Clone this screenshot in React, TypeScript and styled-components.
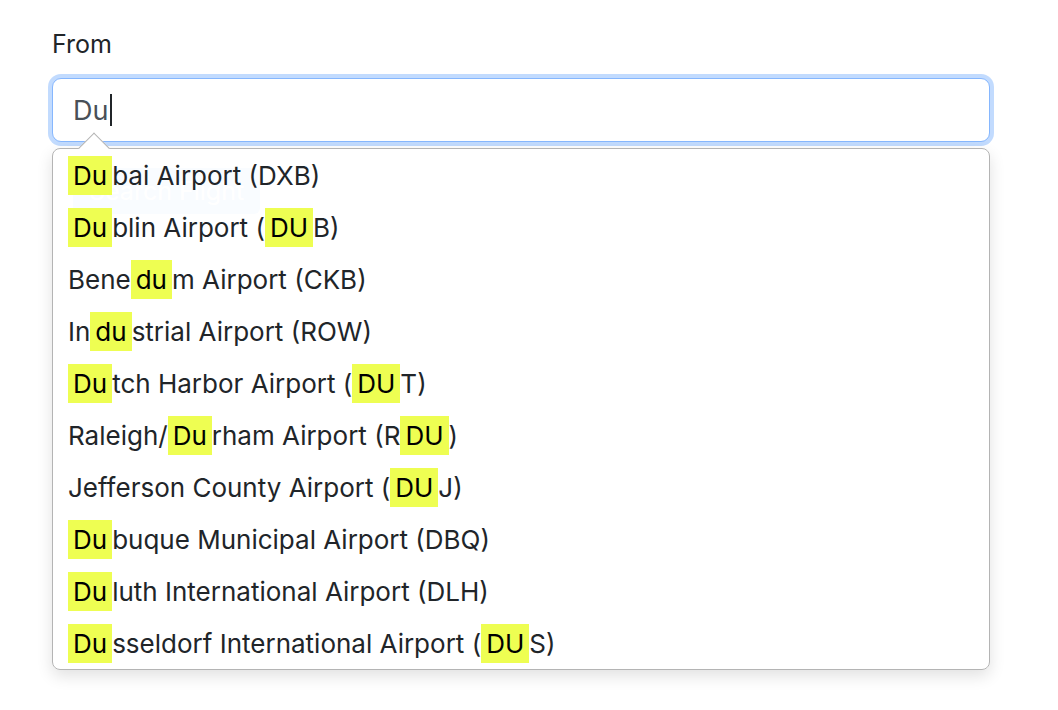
import { Fragment } from "react";
import styled, { createGlobalStyle } from "styled-components";

const GlobalStyle = createGlobalStyle`
  html, body, #root {
    height: 100%;
  }
  body {
    margin: 0;
    background: #fff;
    font-family: Inter, "Liberation Sans", Arial, sans-serif;
    color: #212529;
  }
`;

const airports = [
  "Dubai Airport (DXB)",
  "Dublin Airport (DUB)",
  "Benedum Airport (CKB)",
  "Industrial Airport (ROW)",
  "Dutch Harbor Airport (DUT)",
  "Raleigh/Durham Airport (RDU)",
  "Jefferson County Airport (DUJ)",
  "Dubuque Municipal Airport (DBQ)",
  "Duluth International Airport (DLH)",
  "Dusseldorf International Airport (DUS)",
];

// split a label into plain / matched parts, case-insensitive
const splitMatches = (text: string, query: string) => {
  const parts: { text: string; hit: boolean }[] = [];
  const lower = text.toLowerCase();
  const q = query.toLowerCase();
  let pos = 0;
  let idx = lower.indexOf(q);
  while (idx !== -1) {
    if (idx > pos) parts.push({ text: text.slice(pos, idx), hit: false });
    parts.push({ text: text.slice(idx, idx + q.length), hit: true });
    pos = idx + q.length;
    idx = lower.indexOf(q, pos);
  }
  if (pos < text.length) parts.push({ text: text.slice(pos), hit: false });
  return parts;
};

export default function App() {
  const query = "Du";

  return (
    <>
      <GlobalStyle />
      <Page>
        <Label>From</Label>
        <Field>
          <FakeInput>
            {query}
            <Caret />
          </FakeInput>
          <Dropdown>
            <Arrow />
            {airports.map((name) => (
              <Item key={name}>
                {splitMatches(name, query).map((p, i) => (
                  <Fragment key={i}>
                    {p.hit ? <Mark>{p.text}</Mark> : p.text}
                  </Fragment>
                ))}
              </Item>
            ))}
          </Dropdown>
        </Field>
        <SearchButton>Search Flight</SearchButton>
      </Page>
    </>
  );
}

const Page = styled.div`
  box-sizing: border-box;
  min-height: 710px;
  padding: 28px 68px 0 52px;
  width: 1058px;
`;

const Label = styled.div`
  font-size: 25px;
  line-height: 32px;
  margin-bottom: 18px;
  color: #212529;
`;

const Field = styled.div`
  position: relative;
  width: 938px;
`;

const FakeInput = styled.div`
  box-sizing: border-box;
  height: 64px;
  display: flex;
  align-items: center;
  padding: 0 20px;
  border: 1px solid #86b7fe;
  border-radius: 9px;
  box-shadow: 0 0 0 4px rgba(13, 110, 253, 0.25);
  font-size: 27px;
  color: #495057;
  background: #fff;
`;

const Caret = styled.span`
  display: inline-block;
  width: 2px;
  height: 32px;
  margin-left: 2px;
  background: #212529;
`;

const Dropdown = styled.div`
  position: absolute;
  top: 70px;
  left: 0;
  right: 0;
  z-index: 2;
  box-sizing: border-box;
  border: 1px solid #b4b4b4;
  border-radius: 8px;
  background: rgba(255, 255, 255, 0.975);
  box-shadow: 0 6px 16px rgba(0, 0, 0, 0.12);
  padding: 0;
`;

const Arrow = styled.div`
  position: absolute;
  top: -12px;
  left: 30px;
  width: 21px;
  height: 21px;
  background: #fff;
  border-top: 1px solid #b4b4b4;
  border-left: 1px solid #b4b4b4;
  transform: rotate(45deg);
`;

const Item = styled.div`
  position: relative;
  height: 52px;
  display: flex;
  align-items: center;
  padding-left: 15px;
  font-size: 26px;
  white-space: pre;
  color: #212529;
`;

const Mark = styled.mark`
  background: #eefe52;
  color: #000;
  padding: 4px 5px;
`;

const SearchButton = styled.button`
  margin: 26px 0 0 21px;
  height: 46px;
  padding: 0 16px;
  border: none;
  border-radius: 6px;
  background: #0d6efd;
  color: #fff;
  font-family: Inter, "Liberation Sans", Arial, sans-serif;
  font-size: 25px;
`;
